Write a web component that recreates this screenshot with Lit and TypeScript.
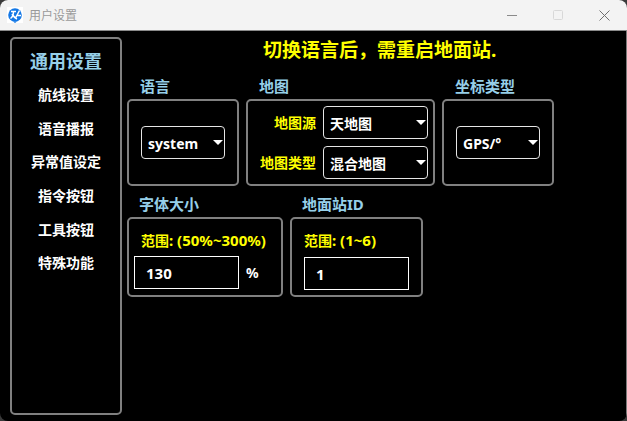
import { LitElement, html, css } from "lit";
import { customElement } from "lit/decorators.js";

@customElement("app-root")
export class AppRoot extends LitElement {
  static styles = css`
    :host { display: block; width: 627px; height: 421px; overflow: hidden; background: #3a3a3a; font-family: "Noto Sans", "Noto Sans CJK SC", sans-serif; font-weight: 700; color: #fff; }
    .win { width: 627px; height: 421px; border-radius: 8px; overflow: hidden; background: #000; display: flex; flex-direction: column; }
    .title { height: 30px; flex: none; background: #f3f3f3; border-bottom: 1px solid #8a8a8a; display: flex; align-items: center; padding-left: 7px; font-weight: 400; font-size: 12px; color: #9a9a9a; }
    .logo { width: 16px; height: 16px; margin-right: 6px; display: block; }
    .spacer { flex: 1; }
    .ctl { width: 46px; height: 30px; display: flex; align-items: center; justify-content: center; }
    .ctl svg { display: block; }
    .ctls { display: flex; }
    .body { flex: 1; display: flex; padding: 6px 0 6px 10px; gap: 5px; align-items: stretch; border-right: 1px solid #7a7a7a; }
    .side { width: 112px; box-sizing: border-box; border: 2px solid #808080; border-radius: 5px; display: flex; flex-direction: column; align-items: center; padding-top: 9px; }
    .side-h { font-size: 18px; line-height: 26px; color: #96cfe8; height: 26px; margin-bottom: 11px; }
    .side-i { font-size: 14px; line-height: 20px; height: 33.7px; }
    .main { flex: 1; display: flex; flex-direction: column; }
    .head { color: #ffff00; font-size: 19px; line-height: 26px; height: 26px; margin-left: 136px; }
    .row { display: flex; gap: 7px; }
    .row1 { margin-top: 13px; }
    .row2 { margin-top: 8px; }
    .grp { display: flex; flex-direction: column; }
    .lbl { color: #96cfe8; font-size: 15px; line-height: 20px; height: 20px; margin-left: 13px; margin-bottom: 3px; }
    .row2 .lbl { margin-left: 12px; }
    .box { box-sizing: border-box; border: 2px solid #808080; border-radius: 5px; display: flex; flex-direction: column; }
    .box.sel { width: 112px; height: 87px; align-items: center; justify-content: center; }
    .box.map { width: 189px; height: 87px; padding: 5px 5px 5px 0; gap: 7px; }
    .line { display: flex; align-items: center; justify-content: flex-end; gap: 7px; }
    .ylw { color: #ffff00; font-size: 14px; line-height: 18px; }
    .lat { font-size: 15px; }
    .select { box-sizing: border-box; height: 33px; border: 1px solid #e6e6e6; border-radius: 4px; display: flex; align-items: center; padding: 1px 0 0 6px; font-size: 14px; position: relative; }
    .select.s { width: 84px; }
    .select.m { width: 105px; }
    .arrow { position: absolute; right: 1px; top: 13px; width: 0; height: 0; border-left: 5px solid transparent; border-right: 5px solid transparent; border-top: 5px solid #fff; }
    .box.inp { height: 80px; padding: 10px 0 0 5px; }
    .box.inp.b1 { width: 156px; }
    .box.inp.b2 { width: 133px; padding-left: 12px; }
    .range { margin-left: 7px; height: 27px; line-height: 22px; }
    .b2 .range { margin-left: 0; height: 28px; }
    .inline { display: flex; align-items: center; gap: 7px; }
    .input { box-sizing: border-box; width: 105px; height: 33px; border: 1px solid #fff; display: flex; align-items: center; padding-left: 11px; font-size: 15px; }
    .pct { font-size: 14px; }
  `;

  private sel(text: string, cls: string) {
    return html`<div class="select ${cls}">${text}<span class="arrow"></span></div>`;
  }

  render() {
    return html`
      <div class="win">
        <div class="title">
          <svg class="logo" viewBox="0 0 16 16">
            <rect width="16" height="16" fill="#fff"/>
            <circle cx="8" cy="8" r="6.8" fill="#1478e6"/>
            <path d="M4 4.5H9M6.5 4.5C6.5 8 5.5 10 3.5 11.5M5 7C6.5 9.5 8 11 10 12M12.5 3.5L8.5 11M10 8.5H14" stroke="#fff" stroke-width="1.5" fill="none"/>
            <path d="M6 14.5H10L8 16Z" fill="#1478e6"/>
          </svg>
          <span>用户设置</span>
          <div class="spacer"></div>
          <div class="ctls">
            <div class="ctl"><svg width="10" height="10" viewBox="0 0 10 10"><path d="M0 5.5H10" stroke="#8a8a8a"/></svg></div>
            <div class="ctl"><svg width="10" height="10" viewBox="0 0 10 10"><rect x=".5" y=".5" width="9" height="9" rx="1" fill="none" stroke="#d8d8d8"/></svg></div>
            <div class="ctl"><svg width="11" height="11" viewBox="0 0 11 11"><path d="M.5 .5L10.5 10.5M10.5 .5L.5 10.5" stroke="#707070"/></svg></div>
          </div>
        </div>
        <div class="body">
          <div class="side">
            <div class="side-h">通用设置</div>
            ${["航线设置","语音播报","异常值设定","指令按钮","工具按钮","特殊功能"].map(t => html`<div class="side-i">${t}</div>`)}
          </div>
          <div class="main">
            <div class="head">切换语言后，需重启地面站.</div>
            <div class="row row1">
              <div class="grp"><div class="lbl">语言</div><div class="box sel">${this.sel("system","s")}</div></div>
              <div class="grp"><div class="lbl">地图</div>
                <div class="box map">
                  <div class="line"><span class="ylw">地图源</span>${this.sel("天地图","m")}</div>
                  <div class="line"><span class="ylw">地图类型</span>${this.sel("混合地图","m")}</div>
                </div>
              </div>
              <div class="grp"><div class="lbl">坐标类型</div><div class="box sel">${this.sel("GPS/°","s")}</div></div>
            </div>
            <div class="row row2">
              <div class="grp"><div class="lbl">字体大小</div>
                <div class="box inp b1">
                  <div class="ylw range">范围<span class="lat">: (50%~300%)</span></div>
                  <div class="inline"><div class="input">130</div><span class="pct">%</span></div>
                </div>
              </div>
              <div class="grp"><div class="lbl">地面站ID</div>
                <div class="box inp b2">
                  <div class="ylw range">范围<span class="lat">: (1~6)</span></div>
                  <div class="inline"><div class="input">1</div></div>
                </div>
              </div>
            </div>
          </div>
        </div>
      </div>
    `;
  }
}
